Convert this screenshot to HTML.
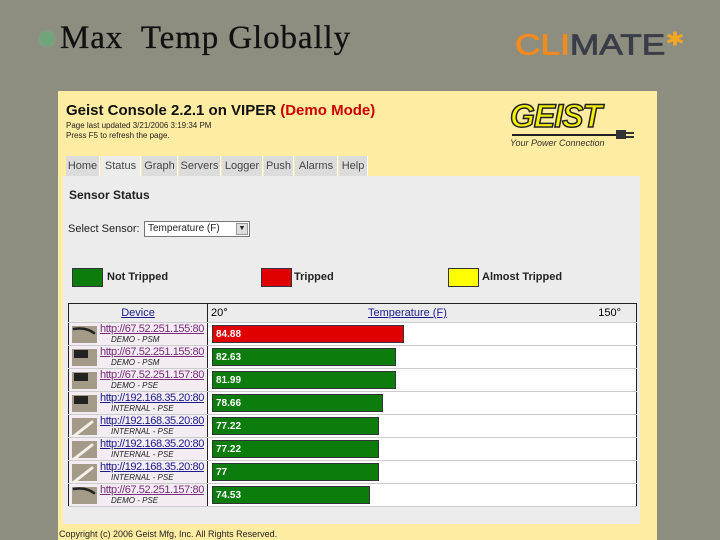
<!DOCTYPE html>
<html><head><meta charset="utf-8"><style>
*{margin:0;padding:0;box-sizing:border-box}
body{width:720px;height:540px;overflow:hidden;background:#8d8e80;position:relative;font-family:"Liberation Sans",sans-serif}
.a{position:absolute}
.title{left:60px;top:20px;font-family:"Liberation Serif",serif;font-size:33px;letter-spacing:0.9px;color:#111;-webkit-text-stroke:0.3px #111}
.bullet{left:40px;top:32px;width:14px;height:14px;border-radius:50%;background:#6fa57b;box-shadow:0 0 4px #7cb386}
.climate{left:515px;top:28px;font-size:36px;font-weight:normal;letter-spacing:0px;transform:scale(0.98,0.8);transform-origin:top left;-webkit-text-stroke:1px currentColor}
.panel{left:58px;top:91px;width:599px;height:449px;background:#fdeca1}
.gray{left:63px;top:176px;width:577px;height:348px;background:#ececec}
.tab{top:156px;height:20px;background:#dcdcdc;border-right:1px solid #fff;font-size:11px;color:#444;text-align:center;line-height:20px}
.leg{top:268px;width:31px;height:19px;border:1px solid #333}
.lt{top:271px;font-size:11px;font-weight:bold;color:#222}
table{position:absolute;left:68px;top:303px;width:569px;border-collapse:collapse;border:1px solid #222;background:#fff}
td{height:23px;border-bottom:1px solid #ccc;padding:0;font-size:11px}
.dev{width:139px;background:#f3ecf3;border-right:1px solid #222;position:relative}
.th td{height:19px;background:#ececec;border-bottom:1px solid #ccc}
.img{position:absolute;left:3px;top:3px;width:25px;height:17px;background:#a49a88}
.url{position:absolute;left:31px;top:0px;font-size:11px;text-decoration:underline;color:#7a2a7a;white-space:nowrap;letter-spacing:-0.4px}
.sub{position:absolute;left:42px;top:12px;font-size:8px;font-style:italic;color:#222}
.bar{height:18px;margin-left:4px;color:#fff;font-size:10px;font-weight:bold;line-height:18px;padding-left:3px;border:1px solid #333}
.g{background:#0c7c0c}.r{background:#e00000}
</style></head><body>
<div class="a bullet"></div>
<div class="a title">Max&nbsp; Temp Globally</div>
<div class="a climate"><span style="color:#f28a1e">CLI</span><span style="color:#3a3d48">MATE</span><span style="color:#f5a623;font-size:24px;vertical-align:top;-webkit-text-stroke:0">✱</span></div>
<div class="a panel"></div>
<div class="a" style="left:66px;top:102px;font-size:15px;font-weight:bold;color:#111">Geist Console 2.2.1 on VIPER <span style="color:#c00">(Demo Mode)</span></div>
<div class="a" style="left:66px;top:121px;font-size:8px;color:#222">Page last updated 3/21/2006 3:19:34 PM</div>
<div class="a" style="left:66px;top:131px;font-size:8px;color:#222">Press F5 to refresh the page.</div>
<div class="a" style="left:510px;top:98px;font-size:32px;font-weight:bold;font-style:italic;color:#f4f000;-webkit-text-stroke:1.5px #222;letter-spacing:-1px">GEIST</div>
<div class="a" style="left:512px;top:134px;width:110px;height:2px;background:#222"></div>
<div class="a" style="left:616px;top:130px;width:10px;height:9px;background:#333"></div>
<div class="a" style="left:626px;top:132px;width:8px;height:2px;background:#333"></div>
<div class="a" style="left:626px;top:136px;width:8px;height:2px;background:#333"></div>
<div class="a" style="left:510px;top:138px;font-size:9px;font-style:italic;color:#333">Your Power Connection</div>
<div class="a gray"></div>
<div class="a tab" style="left:66px;width:34px">Home</div>
<div class="a tab" style="left:101px;width:40px;background:#ececec">Status</div>
<div class="a tab" style="left:142px;width:36px">Graph</div>
<div class="a tab" style="left:179px;width:42px">Servers</div>
<div class="a tab" style="left:222px;width:41px">Logger</div>
<div class="a tab" style="left:264px;width:30px">Push</div>
<div class="a tab" style="left:295px;width:43px">Alarms</div>
<div class="a tab" style="left:339px;width:29px">Help</div>
<div class="a" style="left:69px;top:188px;font-size:12px;font-weight:bold;color:#222">Sensor Status</div>
<div class="a" style="left:68px;top:223px;font-size:11px;color:#222">Select Sensor:</div>
<div class="a" style="left:144px;top:221px;width:106px;height:16px;background:#fff;border:1px solid #777;font-size:10px;line-height:14px;padding-left:3px;color:#222">Temperature (F)<span style="position:absolute;right:1px;top:1px;width:12px;height:12px;background:#ddd;border:1px solid #999;font-size:7px;text-align:center;line-height:10px">▼</span></div>
<div class="a leg" style="left:72px;background:#0c7c0c"></div><div class="a lt" style="left:107px">Not Tripped</div>
<div class="a leg" style="left:261px;background:#e00000"></div><div class="a lt" style="left:294px">Tripped</div>
<div class="a leg" style="left:448px;background:#ff0"></div><div class="a lt" style="left:482px">Almost Tripped</div>
<table>
<tr class="th"><td class="dev" style="background:#ececec;text-align:center"><u style="color:#1a1a8a">Device</u></td><td style="position:relative"><span style="position:absolute;left:3px;top:3px">20°</span><u style="position:absolute;left:160px;top:3px;color:#1a1a8a">Temperature (F)</u><span style="position:absolute;right:15px;top:3px">150°</span></td></tr>
<tr><td class="dev"><div class="img"></div><span class="url">http://67.52.251.155:80</span><span class="sub">DEMO - PSM</span></td><td><div class="bar r" style="width:192px">84.88</div></td></tr>
<tr><td class="dev"><div class="img"></div><span class="url">http://67.52.251.155:80</span><span class="sub">DEMO - PSM</span></td><td><div class="bar g" style="width:184px">82.63</div></td></tr>
<tr><td class="dev"><div class="img"></div><span class="url">http://67.52.251.157:80</span><span class="sub">DEMO - PSE</span></td><td><div class="bar g" style="width:184px">81.99</div></td></tr>
<tr><td class="dev"><div class="img"></div><span class="url" style="color:#1a1a8a">http://192.168.35.20:80</span><span class="sub">INTERNAL - PSE</span></td><td><div class="bar g" style="width:171px">78.66</div></td></tr>
<tr><td class="dev"><div class="img"></div><span class="url" style="color:#1a1a8a">http://192.168.35.20:80</span><span class="sub">INTERNAL - PSE</span></td><td><div class="bar g" style="width:167px">77.22</div></td></tr>
<tr><td class="dev"><div class="img"></div><span class="url" style="color:#1a1a8a">http://192.168.35.20:80</span><span class="sub">INTERNAL - PSE</span></td><td><div class="bar g" style="width:167px">77.22</div></td></tr>
<tr><td class="dev"><div class="img"></div><span class="url" style="color:#1a1a8a">http://192.168.35.20:80</span><span class="sub">INTERNAL - PSE</span></td><td><div class="bar g" style="width:167px">77</div></td></tr>
<tr><td class="dev"><div class="img"></div><span class="url">http://67.52.251.157:80</span><span class="sub">DEMO - PSE</span></td><td><div class="bar g" style="width:158px">74.53</div></td></tr>
</table>
<div class="a" style="left:59px;top:529px;font-size:9px;color:#222">Copyright (c) 2006 Geist Mfg, Inc. All Rights Reserved.</div>
<svg class="a" style="left:0;top:0" width="720" height="540">
<g stroke="#222" stroke-width="2.5" fill="none" stroke-linecap="round">
<path d="M74 329 Q86 327 94 333"/><path d="M74 489 Q86 487 94 493"/>
</g>
<g fill="#222"><rect x="74" y="350" width="14" height="8"/><rect x="74" y="373" width="14" height="8"/><rect x="74" y="396" width="14" height="8"/></g>
<g stroke="#f4f0e8" stroke-width="3" stroke-linecap="round"><path d="M74 436 L92 422"/><path d="M74 459 L92 445"/><path d="M74 482 L92 468"/></g>
</svg>
</body></html>
